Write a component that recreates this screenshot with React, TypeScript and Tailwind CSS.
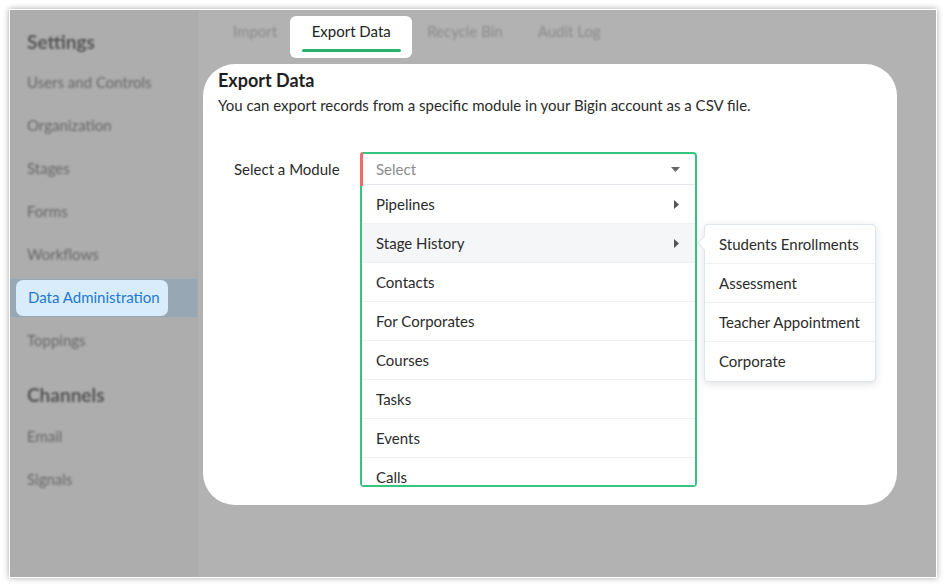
import React from "react";

const sideItems = ["Users and Controls", "Organization", "Stages", "Forms", "Workflows"];
const modules = ["Pipelines", "Stage History", "Contacts", "For Corporates", "Courses", "Tasks", "Events", "Calls"];
const subModules = ["Students Enrollments", "Assessment", "Teacher Appointment", "Corporate"];

const CaretRight = () => (
  <svg width="5" height="9" viewBox="0 0 5 9" className="fill-[#555]">
    <path d="M0 0 L5 4.5 L0 9 Z" />
  </svg>
);

const SideItem = ({ label }: { label: string }) => (
  <div className="h-[43px] flex items-center pl-[17px] text-[15px] text-[#676767] blur-[1px]">{label}</div>
);

const App = () => {
  return (
    <div className="w-[946px] h-[587px] bg-white pt-[9px] pl-[9px] font-['Lato','Noto_Sans',sans-serif]">
      <div className="w-[928px] h-[569px] border border-white shadow-[0_0_6px_rgba(0,0,0,0.35)] flex overflow-hidden">
        {/* sidebar, dimmed */}
        <div className="w-[188px] shrink-0 bg-[#adadad] border-r border-[#a9a9a9] pt-[20px]">
          <div className="h-[24px] flex items-center pl-[17px] text-[19px] font-bold text-[#555] blur-[1px]">Settings</div>
          <div className="mt-[7px]">
            {sideItems.map((s) => (
              <SideItem key={s} label={s} />
            ))}
            <div className="h-[43px] flex items-center">
              <div className="w-full h-[38px] bg-[#97a7b3] flex items-center">
                <div className="ml-[6px] w-[152px] h-[36px] rounded-[7px] bg-[#d9ecfc] flex items-center pl-[12px] text-[15px] text-[#1d7ad2]">
                  Data Administration
                </div>
              </div>
            </div>
            <SideItem label="Toppings" />
          </div>
          <div className="mt-[21px] h-[24px] flex items-center pl-[17px] text-[19px] font-bold text-[#555] blur-[1px]">Channels</div>
          <div className="mt-[8px]">
            <SideItem label="Email" />
            <SideItem label="Signals" />
          </div>
        </div>

        {/* main */}
        <div className="flex-1 bg-[#b2b2b2]">
          <div className="h-[54px] flex items-start pt-[6px] pl-[35px] text-[15px]">
            <div className="pt-[5px] leading-[20px] text-[#8a8a8a] blur-[1px]">Import</div>
            <div className="ml-[13px] w-[122px] h-[42px] bg-white rounded-[6px] flex flex-col items-center pt-[5px]">
              <div className="leading-[20px] text-[#222]">Export Data</div>
              <div className="mt-[8px] w-[99px] h-[3px] rounded-full bg-[#27b46a]" />
            </div>
            <div className="ml-[15px] pt-[5px] leading-[20px] text-[#8a8a8a] blur-[1px]">Recycle Bin</div>
            <div className="ml-[35px] pt-[5px] leading-[20px] text-[#8a8a8a] blur-[1px]">Audit Log</div>
          </div>

          <div className="ml-[5px] w-[694px] h-[441px] bg-white rounded-[32px] px-[15px] pt-[6px]">
            <h1 className="text-[18px] font-bold leading-[20px] text-[#1f1f1f]">Export Data</h1>
            <p className="mt-[5px] text-[15px] leading-[20px] text-[#2b2b2b]">
              You can export records from a specific module in your Bigin account as a CSV file.
            </p>

            <div className="mt-[37px] pl-[16px] flex items-start">
              <div className="w-[126px] h-[35px] flex items-center text-[15px] text-[#2b2b2b]">Select a Module</div>

              <div className="relative w-[337px] h-[335px] border-2 border-[#36c47e] rounded-[4px]">
                <div className="absolute -left-[2px] -top-[2px] w-[3px] h-[34px] bg-[#f26a6a] rounded-tl-[3px]" />
                <div className="h-full overflow-hidden">
                  <div className="h-[31px] flex items-center justify-between pl-[14px] pr-[15px] border-b border-[#e4e7ec]">
                    <span className="text-[15px] text-[#8c8c8c]">Select</span>
                    <svg width="9" height="5" viewBox="0 0 9 5" className="fill-[#666]">
                      <path d="M0 0 L9 0 L4.5 5 Z" />
                    </svg>
                  </div>
                  {modules.map((m, i) => (
                    <div
                      key={m}
                      className={`h-[39px] shrink-0 flex items-center justify-between pl-[14px] pr-[16px] border-b border-[#eef0f3] text-[15px] text-[#2b2b2b] ${
                        i === 1 ? "bg-[#f5f6f8]" : "bg-white"
                      }`}
                    >
                      <span>{m}</span>
                      {i < 2 && <CaretRight />}
                    </div>
                  ))}
                </div>

                {/* submenu for Stage History */}
                <div className="absolute left-[342px] top-[70px] w-[172px] bg-white border border-[#dfe5ec] rounded-[4px] shadow-[0_2px_8px_rgba(0,0,0,0.12)]">
                  <div className="absolute -left-[6px] top-[13px] w-[10px] h-[10px] bg-white border-l border-b border-[#dfe5ec] rotate-45" />
                  {subModules.map((s, i) => (
                    <div
                      key={s}
                      className={`relative h-[39px] flex items-center pl-[14px] text-[15px] text-[#2b2b2b] ${
                        i < subModules.length - 1 ? "border-b border-[#eef0f3]" : ""
                      }`}
                    >
                      {s}
                    </div>
                  ))}
                </div>
              </div>
            </div>
          </div>
        </div>
      </div>
    </div>
  );
};

export default App;
